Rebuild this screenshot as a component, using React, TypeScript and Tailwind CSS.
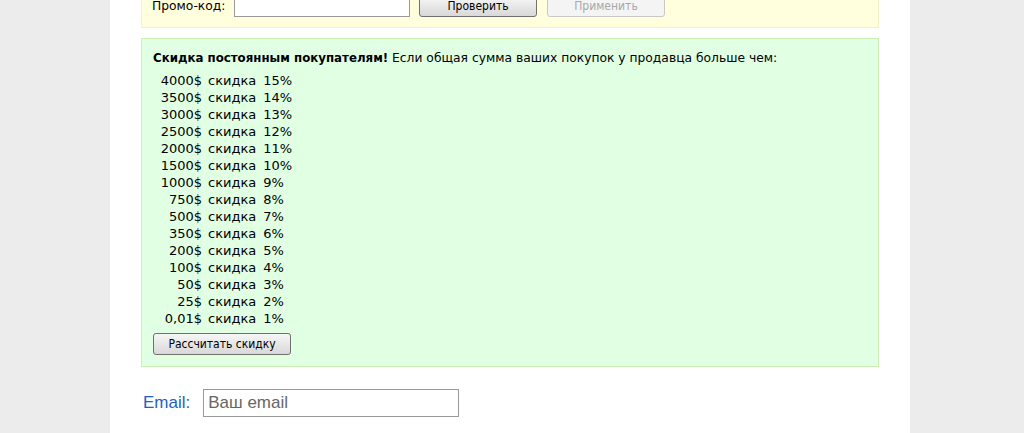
import React from 'react';

const discounts = [
  ['4000$', '15%'],
  ['3500$', '14%'],
  ['3000$', '13%'],
  ['2500$', '12%'],
  ['2000$', '11%'],
  ['1500$', '10%'],
  ['1000$', '9%'],
  ['750$', '8%'],
  ['500$', '7%'],
  ['350$', '6%'],
  ['200$', '5%'],
  ['100$', '4%'],
  ['50$', '3%'],
  ['25$', '2%'],
  ['0,01$', '1%'],
];

const verdana = "font-['DejaVu_Sans',Verdana,sans-serif]";
const tahoma = "font-['DejaVu_Sans_Condensed','Liberation_Sans',sans-serif]";

const btn =
  'h-[21px] rounded-[3px] border border-[#707070] bg-gradient-to-b from-[#f6f6f6] to-[#d8d8d8] text-[12px] text-black leading-none';

const App = () => {
  return (
    <div className="h-[433px] overflow-hidden bg-[#ececec]">
      <div className="ml-[110px] flow-root h-full w-[800px] bg-white px-[31px]">
        {/* Promo code box (top is scrolled off) */}
        <div className={`-mt-[12px] border border-[#f2f2c4] bg-[#ffffdd] px-[10px] pb-[10px] pt-[6px] ${verdana} text-[12.3px] text-black`}>
          <div className="flex items-center">
            <span className="w-[73px] shrink-0 whitespace-nowrap">Промо-код:</span>
            <input className="ml-[9px] h-[22px] w-[176px] border border-[#999] bg-white" />
            <button className={`${btn} ${tahoma} ml-[9px] w-[118px]`}>Проверить</button>
            <button className={`ml-[10px] h-[21px] w-[118px] rounded-[3px] border border-[#c8c8c8] bg-[#f4f4f4] text-[12px] leading-none text-[#a8a8a8] ${tahoma}`}>
              Применить
            </button>
          </div>
        </div>

        {/* Loyalty discounts */}
        <div className={`mt-[10px] border border-[#c9f1b4] bg-[#e1ffe3] px-[11px] pb-[11px] pt-[11px] ${verdana} text-[13px] leading-[17px] text-black`}>
          <p className="text-[12.3px]">
            <b className="text-[11.8px]">Скидка постоянным покупателям!</b> Если общая сумма ваших покупок у продавца больше чем:
          </p>
          <div className="mt-[5px] flex flex-col">
            {discounts.map(([sum, pct]) => (
              <div key={sum} className="flex h-[17px]">
                <span className="w-[49px] text-right">{sum}</span>
                <span className="ml-[6px]">скидка</span>
                <span className="ml-[7px]">{pct}</span>
              </div>
            ))}
          </div>
          <button className={`${btn} ${tahoma} mt-[6px] h-[22px] w-[138px]`}>Рассчитать скидку</button>
        </div>

        {/* Email */}
        <div className="mt-[22px] flex items-center pl-[2px] font-['Liberation_Sans',Arial,sans-serif]">
          <label className="text-[17px] text-[#1e63c4]">Email:</label>
          <input
            placeholder="Ваш email"
            className="ml-[13px] h-[28px] w-[256px] border border-[#999] bg-white px-[4px] text-[17px] text-black placeholder:text-[#666]"
          />
        </div>
      </div>
    </div>
  );
};

export default App;
